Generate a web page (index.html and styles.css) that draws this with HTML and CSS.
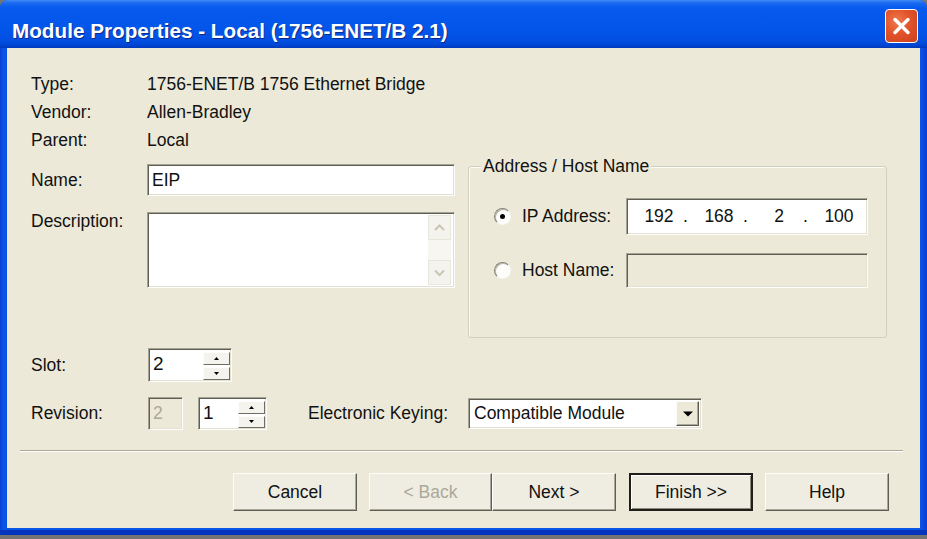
FILE: index.html
```html
<!DOCTYPE html>
<html>
<head>
<meta charset="utf-8">
<title>Module Properties</title>
<link rel="stylesheet" href="styles.css">
</head>
<body>
<div class="window">
  <div class="titlebar">
    <span class="title">Module Properties - Local (1756-ENET/B 2.1)</span>
    <span class="close">
      <svg width="31" height="32" viewBox="0 0 31 32"><path d="M9 9.5 L22 22.5 M22 9.5 L9 22.5" stroke="#fff" stroke-width="3.4" stroke-linecap="round"/></svg>
    </span>
  </div>
  <div class="frame">
    <div class="client">
      <div class="top">
        <div class="fields">
          <div class="row info"><span class="lbl">Type:</span><span>1756-ENET/B 1756 Ethernet Bridge</span></div>
          <div class="row info"><span class="lbl">Vendor:</span><span>Allen-Bradley</span></div>
          <div class="row info"><span class="lbl">Parent:</span><span>Local</span></div>
          <div class="row name"><span class="lbl">Name:</span><div class="edit name-box">EIP</div></div>
          <div class="row desc"><span class="lbl desc-lbl">Description:</span>
            <div class="edit desc-box">
              <div class="vscroll">
                <div class="sb-btn"><svg width="21" height="23" viewBox="0 0 21 23"><polyline points="6,14 10.5,9.5 15,14" fill="none" stroke="#c9c6b8" stroke-width="2"/></svg></div>
                <div class="sb-btn"><svg width="21" height="23" viewBox="0 0 21 23"><polyline points="6,9.5 10.5,14 15,9.5" fill="none" stroke="#c9c6b8" stroke-width="2"/></svg></div>
              </div>
            </div>
          </div>
        </div>
        <div class="group">
          <span class="legend">Address / Host Name</span>
          <div class="opt ip-opt">
            <span class="radio on"></span>
            <span class="opt-lbl">IP Address:</span>
            <div class="edit ip-box">
              <span class="seg">192</span><span class="dot">.</span><span class="seg">168</span><span class="dot">.</span><span class="seg">2</span><span class="dot">.</span><span class="seg">100</span>
            </div>
          </div>
          <div class="opt host-opt">
            <span class="radio"></span>
            <span class="opt-lbl">Host Name:</span>
            <div class="edit host-box"></div>
          </div>
        </div>
      </div>
      <div class="row slot-row">
        <span class="lbl lbl-b">Slot:</span>
        <div class="edit spin slot-spin">
          <span class="spin-val">2</span>
          <div class="spinbtns">
            <span class="sbtn up"><svg width="5" height="3" viewBox="0 0 5 3"><polygon points="0,3 2.5,0 5,3" fill="#000"/></svg></span>
            <span class="sbtn down"><svg width="5" height="3" viewBox="0 0 5 3"><polygon points="0,0 5,0 2.5,3" fill="#000"/></svg></span>
          </div>
        </div>
      </div>
      <div class="row rev-row">
        <span class="lbl lbl-b">Revision:</span>
        <div class="edit dis-box">2</div>
        <div class="edit spin rev-spin">
          <span class="spin-val">1</span>
          <div class="spinbtns">
            <span class="sbtn up"><svg width="5" height="3" viewBox="0 0 5 3"><polygon points="0,3 2.5,0 5,3" fill="#000"/></svg></span>
            <span class="sbtn down"><svg width="5" height="3" viewBox="0 0 5 3"><polygon points="0,0 5,0 2.5,3" fill="#000"/></svg></span>
          </div>
        </div>
        <span class="ek-lbl">Electronic Keying:</span>
        <div class="edit combo">
          <span>Compatible Module</span>
          <span class="combo-btn"><svg width="10" height="6" viewBox="0 0 10 6"><polygon points="0,0.5 10,0.5 5,5.5" fill="#000"/></svg></span>
        </div>
      </div>
      <div class="sep"></div>
      <div class="buttons">
        <span class="btn">Cancel</span>
        <span class="btn disabled gap">&lt; Back</span>
        <span class="btn">Next &gt;</span>
        <span class="btn default gap">Finish &gt;&gt;</span>
        <span class="btn gap">Help</span>
      </div>
    </div>
  </div>
</div>
</body>
</html>
```
FILE: styles.css
```css
html, body {
  margin: 0;
  padding: 0;
}
body {
  background: #747474;
  font-family: "Liberation Sans", Arial, sans-serif;
  font-size: 17.5px;
  color: #111;
  white-space: nowrap;
}
.window {
  width: 927px;
  height: 535px;
  display: flex;
  flex-direction: column;
  border-radius: 8px 8px 0 0;
  overflow: hidden;
  background: #0a52e3;
}
.titlebar {
  height: 48px;
  flex: none;
  display: flex;
  justify-content: space-between;
  align-items: flex-start;
  padding: 0 9px 0 12px;
  background: linear-gradient(to bottom, #3f8df6 0px, #1a6af1 3px, #0759ee 8px, #0356ea 28px, #0250e2 40px, #0046d4 45px, #0038b8 48px);
}
.title {
  color: #fff;
  font-weight: bold;
  font-size: 20.7px;
  line-height: 24px;
  margin-top: 19px;
  text-shadow: 1px 1px 0 #0a2a8c;
}
.close {
  margin-top: 9px;
  width: 33px;
  height: 34px;
  box-sizing: border-box;
  border: 1px solid #fff;
  border-radius: 4px;
  background: radial-gradient(circle at 35% 35%, #ef7a4f 0%, #e2532a 45%, #c8401e 100%);
  display: flex;
  align-items: center;
  justify-content: center;
}
.frame {
  flex: 1;
  display: flex;
  padding: 0 7px 7px;
  background: linear-gradient(to right, #0a3fd0 0px, #0a55e6 3px, #0a55e6 920px, #0a3fd0 927px);
  box-shadow: inset 0 -5px 0 #0535bd;
}
.client {
  flex: 1;
  background: #ece9d8;
  padding-top: 22px;
  display: flex;
  flex-direction: column;
}
.top {
  display: flex;
  align-items: flex-start;
  padding-left: 24px;
}
.fields {
  width: 424px;
  flex: none;
}
.row {
  display: flex;
  align-items: center;
}
.info {
  height: 28px;
}
.lbl {
  width: 116px;
  flex: none;
}
.edit {
  box-sizing: border-box;
  background: #fff;
  border: 1px solid;
  border-color: #a5a394 #fdfdfb #fdfdfb #a5a394;
  box-shadow: inset 1px 1px 0 #5f5e55, inset -1px -1px 0 #e3e0d2;
}
.name {
  margin-top: 10px;
  height: 32px;
}
.name-box {
  width: 308px;
  height: 32px;
  padding-left: 4px;
  display: flex;
  align-items: center;
}
.desc {
  margin-top: 16px;
  align-items: flex-start;
}
.desc-lbl {
  line-height: 18px;
}
.desc-box {
  width: 308px;
  height: 76px;
  padding: 2px 3px 2px 2px;
  display: flex;
  justify-content: flex-end;
}
.vscroll {
  width: 23px;
  display: flex;
  flex-direction: column;
  justify-content: space-between;
  background: #f7f6f1;
}
.sb-btn {
  height: 25px;
  box-sizing: border-box;
  border: 1px solid #e8e6db;
  background: #f4f3ee;
  display: flex;
  align-items: center;
  justify-content: center;
}
.group {
  margin: 96px 0 0 13px;
  width: 419px;
  height: 172px;
  box-sizing: border-box;
  border: 1px solid #d0d0bf;
  border-radius: 3px;
  box-shadow: inset 1px 1px 0 #fbfaf5;
  position: relative;
  padding-top: 31px;
}
.legend {
  position: absolute;
  top: -11px;
  left: 12px;
  padding: 0 2px;
  line-height: 20px;
  background: #ece9d8;
}
.opt {
  display: flex;
  align-items: center;
}
.ip-opt {
  height: 37px;
}
.host-opt {
  margin-top: 18px;
  height: 35px;
}
.radio {
  margin-left: 25px;
  width: 17px;
  height: 17px;
  box-sizing: border-box;
  flex: none;
  border-radius: 50%;
  border: 1px solid;
  border-color: #86847a #f8f7f2 #f8f7f2 #86847a;
  box-shadow: inset 1px 1px 0 #b9b7aa;
  background: #fdfdfb;
  display: flex;
  align-items: center;
  justify-content: center;
}
.radio.on::after {
  content: "";
  width: 5px;
  height: 5px;
  border-radius: 50%;
  background: #000;
}
.opt-lbl {
  margin-left: 11px;
  width: 104px;
  flex: none;
}
.ip-box {
  width: 242px;
  height: 37px;
  padding-left: 10px;
  display: flex;
  align-items: center;
}
.seg {
  width: 44px;
  text-align: center;
}
.dot {
  width: 16px;
  text-align: left;
  padding-left: 2px;
  box-sizing: border-box;
}
.host-box {
  width: 242px;
  height: 35px;
  background: #ece9d8;
}
.slot-row {
  margin-top: 10px;
  height: 34px;
  padding-left: 24px;
}
.lbl-b {
  width: 117px;
}
.spin {
  display: flex;
  justify-content: space-between;
  align-items: stretch;
  padding: 3px 1px 1px 4px;
}
.slot-spin {
  width: 84px;
  height: 34px;
}
.spin-val {
  line-height: 24px;
  font-size: 19px;
}
.spinbtns {
  width: 27px;
  display: flex;
  flex-direction: column;
  gap: 2px;
}
.sbtn {
  flex: 1;
  box-sizing: border-box;
  background: #f4f3ee;
  border: 1px solid;
  border-color: #fdfdfb #6f6d62 #6f6d62 #fdfdfb;
  display: flex;
  align-items: center;
  justify-content: center;
}
.rev-row {
  margin-top: 15px;
  height: 33px;
  padding-left: 24px;
}
.dis-box {
  width: 35px;
  height: 33px;
  background: #ece9d8;
  color: #aca899;
  padding: 3px 0 0 4px;
  line-height: 24px;
}
.rev-spin {
  margin-left: 15px;
  width: 69px;
  height: 33px;
}
.ek-lbl {
  margin-left: 41px;
  width: 160px;
  flex: none;
}
.combo {
  width: 234px;
  height: 31px;
  display: flex;
  align-items: center;
  justify-content: space-between;
  padding: 2px 2px 2px 5px;
}
.combo-btn {
  width: 23px;
  height: 25px;
  box-sizing: border-box;
  background: #ece9d8;
  border: 1px solid;
  border-color: #fdfdfb #5c5b53 #5c5b53 #fdfdfb;
  box-shadow: inset -1px -1px 0 #aca899;
  display: flex;
  align-items: center;
  justify-content: center;
}
.sep {
  margin: 20px 0 0 13px;
  width: 883px;
  height: 1px;
  background: #aca899;
  border-bottom: 1px solid #fff;
}
.buttons {
  margin-top: 21px;
  display: flex;
  padding-left: 226px;
}
.btn {
  width: 124px;
  height: 38px;
  box-sizing: border-box;
  display: flex;
  align-items: center;
  justify-content: center;
  background: #efede2;
  border: 1px solid;
  border-color: #fdfdfb #5f5e55 #5f5e55 #fdfdfb;
  box-shadow: inset -1px -1px 0 #aca899;
}
.btn.gap {
  margin-left: 12px;
}
.btn.disabled {
  color: #aca899;
  width: 123px;
}
.btn.default {
  margin-left: 13px;
  border: 2px solid #1e1e1a;
  box-shadow: inset 1px 1px 0 #fdfdfb, inset -1px -1px 0 #8c8a7e;
}
```
